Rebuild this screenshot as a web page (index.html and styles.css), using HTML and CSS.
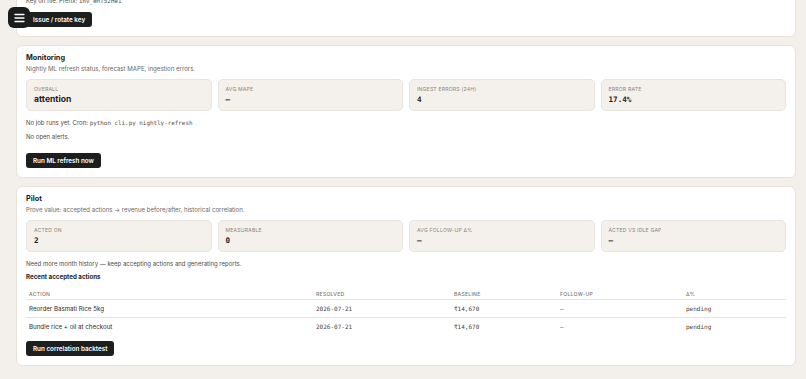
FILE: index.html
```html
<!DOCTYPE html>
<html>
  <head>
    <title>Insights Admin</title>
    <link rel="stylesheet" href="styles.css">
  </head>
  <body>
    <button class="menu-toggle" type="button" aria-label="Menu">
      <svg width="11" height="10" viewBox="0 0 11 10">
        <path d="M1 1.5h9M1 5h9M1 8.5h9" stroke="#fff" stroke-width="1.3" stroke-linecap="round" />
      </svg>
    </button>

    <main class="page">
      <section class="card card-key">
        <p class="note">Key on file. Prefix: <code>inv_WhT52He1</code></p>
        <button class="btn" type="button">Issue / rotate key</button>
      </section>

      <section class="card">
        <h2 class="card-title">Monitoring</h2>
        <p class="card-sub">Nightly ML refresh status, forecast MAPE, ingestion errors.</p>
        <div class="stats">
          <div class="stat">
            <div class="stat-label">Overall</div>
            <div class="stat-value">attention</div>
          </div>
          <div class="stat">
            <div class="stat-label">Avg MAPE</div>
            <div class="stat-value mono">—</div>
          </div>
          <div class="stat">
            <div class="stat-label">Ingest errors (24h)</div>
            <div class="stat-value mono">4</div>
          </div>
          <div class="stat">
            <div class="stat-label">Error rate</div>
            <div class="stat-value mono">17.4%</div>
          </div>
        </div>
        <p class="note">No job runs yet. Cron: <code>python cli.py nightly-refresh</code></p>
        <p class="note note-tight">No open alerts.</p>
        <button class="btn btn-gap" type="button">Run ML refresh now</button>
      </section>

      <section class="card">
        <h2 class="card-title">Pilot</h2>
        <p class="card-sub">Prove value: accepted actions → revenue before/after, historical correlation.</p>
        <div class="stats">
          <div class="stat">
            <div class="stat-label">Acted on</div>
            <div class="stat-value mono">2</div>
          </div>
          <div class="stat">
            <div class="stat-label">Measurable</div>
            <div class="stat-value mono">0</div>
          </div>
          <div class="stat">
            <div class="stat-label">Avg follow-up Δ%</div>
            <div class="stat-value mono">—</div>
          </div>
          <div class="stat">
            <div class="stat-label">Acted vs idle gap</div>
            <div class="stat-value mono">—</div>
          </div>
        </div>
        <p class="note">Need more month history — keep accepting actions and generating reports.</p>
        <h3 class="sub-title">Recent accepted actions</h3>
        <table class="actions">
          <colgroup>
            <col class="col-action">
            <col class="col-resolved">
            <col class="col-baseline">
            <col class="col-follow">
            <col class="col-delta">
          </colgroup>
          <thead>
            <tr>
              <th>Action</th>
              <th>Resolved</th>
              <th>Baseline</th>
              <th>Follow-up</th>
              <th>Δ%</th>
            </tr>
          </thead>
          <tbody>
            <tr>
              <td>Reorder Basmati Rice 5kg</td>
              <td class="mono">2026-07-21</td>
              <td class="mono">₹14,670</td>
              <td class="mono">—</td>
              <td class="mono">pending</td>
            </tr>
            <tr>
              <td>Bundle rice + oil at checkout</td>
              <td class="mono">2026-07-21</td>
              <td class="mono">₹14,670</td>
              <td class="mono">—</td>
              <td class="mono">pending</td>
            </tr>
          </tbody>
        </table>
        <button class="btn btn-small-gap" type="button">Run correlation backtest</button>
      </section>
    </main>
  </body>
</html>
```

FILE: styles.css
```css
body {
  margin: 0;
  background-color: #f3f0eb;
  font-family: Inter, "Noto Sans", sans-serif;
  color: #1d1d1b;
}

.menu-toggle {
  position: fixed;
  top: 7px;
  left: 8px;
  width: 22px;
  height: 21px;
  padding: 0;
  border: none;
  border-radius: 6px;
  background-color: #1b1d1c;
  display: flex;
  align-items: center;
  justify-content: center;
  z-index: 5;
}

.page {
  padding: 0 10px 20px 16px;
  display: flex;
  flex-direction: column;
  gap: 8px;
}

.card {
  background-color: #fff;
  border: 1px solid #e7e3db;
  border-radius: 6px;
  padding: 8px 9px 9px 9px;
}

.card-key {
  margin-top: -12px;
}

.card-title {
  margin: 0;
  font-size: 7.3px;
  line-height: 8px;
  font-weight: 700;
}

.card-sub {
  margin: 3px 0 0;
  font-size: 6.1px;
  line-height: 7px;
  color: #6d685f;
}

.stats {
  margin-top: 7px;
  display: grid;
  grid-template-columns: repeat(4, 1fr);
  gap: 6px;
}

.stat {
  background-color: #f4f1ec;
  border: 1px solid #e8e4dc;
  border-radius: 5px;
  padding: 6px 7px 5px;
}

.stat-label {
  font-size: 5.1px;
  line-height: 6px;
  letter-spacing: 0.04em;
  text-transform: uppercase;
  color: #8a857c;
}

.stat-value {
  margin-top: 2px;
  font-size: 8.6px;
  line-height: 11px;
  font-weight: 700;
}

.mono,
code {
  font-family: "DejaVu Sans Mono", "Liberation Mono", monospace;
}

.stat-value.mono {
  font-size: 7.6px;
}

.note {
  margin: 8px 0 0;
  font-size: 6px;
  line-height: 8px;
  color: #4f4b45;
}

.card-key .note {
  margin-top: 0;
}

.note code {
  font-size: 5.9px;
  color: #55514b;
}

.note-tight {
  margin-top: 6px;
}

.sub-title {
  margin: 5px 0 0;
  font-size: 6.2px;
  line-height: 8px;
  font-weight: 700;
}

.btn {
  display: block;
  margin-top: 7px;
  height: 15px;
  padding: 0 7px;
  border: none;
  border-radius: 3px;
  background-color: #1d1f1e;
  color: #fff;
  font-family: Inter, "Noto Sans", sans-serif;
  font-size: 6.3px;
  font-weight: 600;
  cursor: pointer;
}

.btn-gap {
  margin-top: 12px;
}

.btn-small-gap {
  margin-top: 6px;
}

.actions {
  margin-top: 8px;
  width: 100%;
  border-collapse: collapse;
  table-layout: fixed;
}

.col-action { width: 287px; }
.col-resolved { width: 138px; }
.col-baseline { width: 106px; }
.col-follow { width: 126px; }

.actions th {
  text-align: left;
  font-size: 5.1px;
  font-weight: 500;
  letter-spacing: 0.05em;
  text-transform: uppercase;
  color: #7d786f;
  padding: 0 3px;
  height: 10px;
  vertical-align: middle;
  border-bottom: 1px solid #e8e4dc;
}

.actions td {
  font-size: 6.2px;
  color: #2c2a27;
  padding: 0 3px;
  height: 17px;
  vertical-align: middle;
}

.actions td.mono {
  font-size: 6px;
  color: #45423d;
}

.actions tbody tr:first-child td {
  border-bottom: 1px solid #e8e4dc;
}
```
